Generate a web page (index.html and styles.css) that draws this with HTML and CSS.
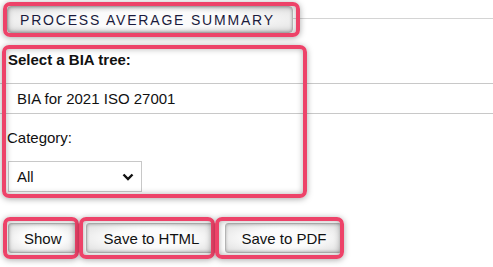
FILE: index.html
```html
<!DOCTYPE html>
<html lang="en">
<head>
    <meta charset="UTF-8">
    <meta name="viewport" content="width=device-width, initial-scale=1.0">
    <title>Process Average Summary</title>
    <link rel="stylesheet" href="styles.css">
</head>
<body>
<div class="page">
    <div class="title-row">
        <div class="title-btn">PROCESS AVERAGE SUMMARY</div>
        <div class="title-line"></div>
    </div>

    <div class="tree-label">Select a BIA tree:</div>
    <div class="tree-item">BIA for 2021 ISO 27001</div>

    <div class="category-label">Category:</div>
    <div class="select-box">
        <span>All</span>
        <svg class="chevron" width="12" height="8" viewBox="0 0 12 8">
            <path d="M1.5 1.5 L6 6 L10.5 1.5" fill="none" stroke="#111" stroke-width="2.4"/>
        </svg>
    </div>

    <div class="button-row">
        <button class="btn">Show</button>
        <button class="btn">Save to HTML</button>
        <button class="btn">Save to PDF</button>
    </div>

    <!-- highlight marks drawn over the page -->
    <div class="mark mark-title"></div>
    <div class="mark mark-form"></div>
    <div class="mark mark-show"></div>
    <div class="mark mark-html"></div>
    <div class="mark mark-pdf"></div>
</div>
</body>
</html>
```

FILE: styles.css
```css
body {
    margin: 0;
    background-color: #ffffff;
    font-family: "Liberation Sans", Arial, sans-serif;
    font-size: 15px;
    color: #111111;
}

.page {
    position: relative;
    width: 493px;
    height: 267px;
    overflow: hidden;
    padding-top: 6px;
    box-sizing: border-box;
}

.title-row {
    display: flex;
    flex-direction: row;
    align-items: flex-start;
    padding-left: 7px;
}

.title-btn {
    width: 286px;
    height: 27px;
    box-sizing: border-box;
    display: flex;
    align-items: center;
    padding-left: 12px;
    font-size: 14px;
    letter-spacing: 1.8px;
    color: #1a1a3c;
    border: 1px solid #bcbcbc;
    border-radius: 4px;
    background: radial-gradient(ellipse at center, #fbfbfb 45%, #dedede 100%);
    box-shadow: inset 0 0 3px rgba(0, 0, 0, 0.25);
}

.title-line {
    flex: 1;
    height: 1px;
    margin-top: 12px;
    background-color: #d4d4d4;
}

.tree-label {
    margin-top: 18px;
    margin-left: 8px;
    line-height: 18px;
    font-weight: bold;
}

.tree-item {
    margin-top: 14px;
    height: 29px;
    line-height: 29px;
    padding-left: 17px;
    border-top: 1px solid #c8c8c8;
    border-bottom: 1px solid #c8c8c8;
}

.category-label {
    margin-top: 15px;
    margin-left: 7px;
    line-height: 18px;
}

.select-box {
    margin-top: 14px;
    margin-left: 8px;
    width: 134px;
    height: 31px;
    box-sizing: border-box;
    border: 1px solid #c8c8c8;
    display: flex;
    align-items: center;
    justify-content: space-between;
    padding: 0 7px 0 8px;
}

.button-row {
    display: flex;
    flex-direction: row;
    gap: 8px;
    margin-top: 31px;
    margin-left: 8px;
}

.btn {
    height: 30px;
    padding: 0 15px;
    font-family: "Liberation Sans", Arial, sans-serif;
    font-size: 15px;
    color: #111111;
    border: 1px solid #b5b5b5;
    border-radius: 3px;
    background: radial-gradient(ellipse at center, #fbfbfb 45%, #dedede 100%);
    box-shadow: inset 0 0 3px rgba(0, 0, 0, 0.25);
}

.btn:nth-child(2) {
    padding: 0 17px;
}

.mark {
    position: absolute;
    box-sizing: border-box;
    border: 4px solid #ed4369;
    border-radius: 7px;
    box-shadow: 0 1px 6px rgba(0, 0, 0, 0.35), inset 0 0 6px rgba(0, 0, 0, 0.3);
}

.mark-title { left: 3px; top: 2px; width: 297px; height: 35px; }
.mark-form  { left: 2px; top: 45px; width: 305px; height: 153px; }
.mark-show  { left: 3px; top: 217px; width: 76px; height: 42px; }
.mark-html  { left: 79px; top: 217px; width: 136px; height: 42px; }
.mark-pdf   { left: 215px; top: 217px; width: 129px; height: 42px; }
```
